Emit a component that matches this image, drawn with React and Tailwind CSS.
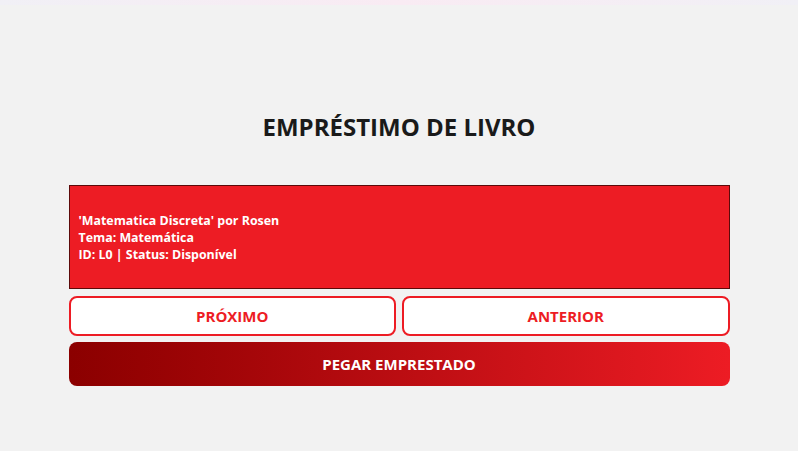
export default function App() {
  const font = { fontFamily: '"Open Sans", "Noto Sans", sans-serif' };
  return (
    <div className="w-[798px] h-[451px] bg-[#f2f2f2] flex flex-col" style={font}>
      <div className="h-[5px] bg-gradient-to-r from-[#f1f0f6] via-[#f9ebf3] to-[#f1f0f6]" />
      <div className="w-[661px] mx-auto flex flex-col">
        <h1 className="mt-[107px] text-center text-[24px] leading-[30px] font-bold text-[#1a1a1a]">EMPRÉSTIMO DE LIVRO</h1>
        <div className="mt-[43px] h-[104px] bg-[#ed1c24] border border-[#5c0a0a] flex flex-col justify-center px-[9px] text-white text-[12.4px] leading-[17px] font-bold">
          <div>'Matematica Discreta' por Rosen</div>
          <div>Tema: Matemática</div>
          <div>ID: L0 | Status: Disponível</div>
        </div>
        <div className="mt-[7px] grid grid-cols-2 gap-[6px]">
          <button className="h-[40px] bg-white border-2 border-[#ed1c24] rounded-[8px] text-[#ed1c24] font-bold text-[15px]">PRÓXIMO</button>
          <button className="h-[40px] bg-white border-2 border-[#ed1c24] rounded-[8px] text-[#ed1c24] font-bold text-[15px]">ANTERIOR</button>
        </div>
        <button className="mt-[6px] h-[44px] rounded-[8px] bg-gradient-to-r from-[#8b0000] to-[#ed1c24] text-white font-bold text-[15px]">PEGAR EMPRESTADO</button>
      </div>
    </div>
  );
}
